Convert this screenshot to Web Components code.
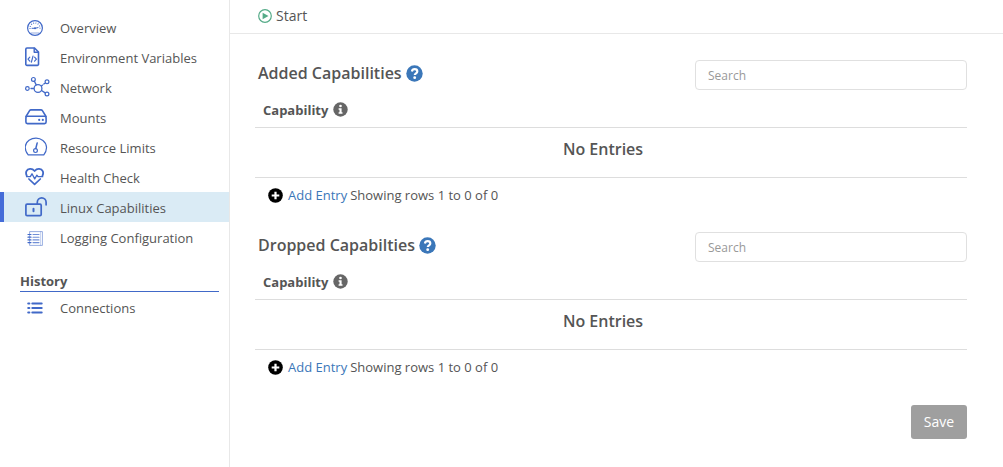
<!DOCTYPE html>
<html lang="en">
<head>
<meta charset="utf-8">
<meta name="viewport" content="width=device-width, initial-scale=1">
<title>Linux Capabilities</title>
<style>
  body {
    margin: 0;
    font: 13px/20px "Open Sans", "Noto Sans", sans-serif;
    color: #555;
    background: #fff;
    --accent: #4169c8;
    --link: #3b77b9;
    --line: #ddd;
    --line-soft: #e8e8e8;
  }
</style>
</head>
<body>
<app-shell>
  <side-nav slot="nav">
    <nav-item icon="gauge">Overview</nav-item>
    <nav-item icon="code-file">Environment Variables</nav-item>
    <nav-item icon="network">Network</nav-item>
    <nav-item icon="drive">Mounts</nav-item>
    <nav-item icon="limit">Resource Limits</nav-item>
    <nav-item icon="heart">Health Check</nav-item>
    <nav-item icon="unlock" active>Linux Capabilities</nav-item>
    <nav-item icon="log">Logging Configuration</nav-item>
    <nav-heading>History</nav-heading>
    <nav-item icon="list">Connections</nav-item>
  </side-nav>
  <action-bar slot="bar">Start</action-bar>
  <capability-panel heading="Added Capabilities"></capability-panel>
  <capability-panel heading="Dropped Capabilties"></capability-panel>
  <save-button>Save</save-button>
</app-shell>

<script>
const define = (name, markup, setup) => {
  const template = document.createElement('template');
  template.innerHTML = markup;
  customElements.define(name, class extends HTMLElement {
    constructor() {
      super();
      this.attachShadow({ mode: 'open' }).append(template.content.cloneNode(true));
    }
    connectedCallback() {
      if (setup) setup(this, this.shadowRoot);
    }
  });
};

// Navigation icons share a 26 x 22 box.
const NAV = body => ({ w: 26, h: 22, body: `<g fill="none" stroke="currentColor" stroke-linecap="round" stroke-linejoin="round">${body}</g>` });
const ICONS = {
  gauge: NAV(`<circle cx="10" cy="12" r="7.4" stroke-width="1.2"/>
    <path d="M5 13v-1a5 5 0 0 1 10 0v1" stroke-width="1.3" stroke-dasharray=".8 1.5" stroke-linecap="butt"/>
    <path d="M7 12.3h3l3-.7" stroke-width="1"/><circle cx="10" cy="12.2" r="1" fill="currentColor" stroke="none"/>
    <path d="M6 17h8" stroke-width=".8" opacity=".7"/>`),
  'code-file': NAV(`<path d="M2 2h7.5l4 4v12.2a1.2 1.2 0 0 1-1.2 1.2H2A1.2 1.2 0 0 1 .8 18.2V3.2A1.2 1.2 0 0 1 2 2z" stroke-width="1.6"/>
    <path d="M9.2 2.3v4h4" stroke-width="1.4"/>
    <path d="M4.8 11.2l-1.800 2 1.800 2M9.600 11.200l1.800 2-1.800 2M8 10.200l-1.600 6" stroke-width="1.2"/>`),
  network: NAV(`<circle cx="13" cy="12.5" r="3.9" stroke-width="1.3"/>
    <circle cx="2.4" cy="12.5" r="1.8" stroke-width="1.2"/><circle cx="8.4" cy="3.4" r="1.9" stroke-width="1.2"/>
    <circle cx="22" cy="5.7" r="1.9" stroke-width="1.2"/><circle cx="22" cy="18" r="1.9" stroke-width="1.2"/>
    <path d="M9.4 5.2l1.800 3.700M16.500 14.500l3.700 2.400" stroke-width="1.3"/>
    <path d="M6 12.5h2.500M16.500 10l1-.9M18.800 8l.7-.6" stroke-width="1.3"/>`),
  drive: NAV(`<path d="M1 10.5L4.6 4.700Q5.100 3.900 6 3.900h9.900q1 0 1.500.8l3.600 5.800" stroke-width="1.6"/>
    <rect x=".9" y="10.2" width="20.2" height="7.4" rx="1.5" stroke-width="1.6"/>
    <circle cx="14.2" cy="13.9" r="1.1" fill="currentColor" stroke="none"/><circle cx="17.8" cy="13.9" r="1.1" fill="currentColor" stroke="none"/>`),
  limit: NAV(`<path d="M3.2 18.9C-1.500 13-.2 7.300 4 4.300c4.300-3 10-2.900 13.900.1 4.200 3.300 5 9.100.9 14.500z" stroke-width="1.2"/>
    <circle cx="10.5" cy="14.6" r="1.9" stroke-width="1.2"/><path d="M10.8 12.5l1.400-5.600" stroke-width="1.5"/>`),
  heart: NAV(`<path d="M1.7 9.5C.2 6.600 1.500 3.200 5 2.900c2-.2 3.500.8 4.600 2.100 1.100-1.300 2.600-2.300 4.600-2.100 3.500.3 4.800 3.700 3.300 6.600" stroke-width="1.8"/>
    <path d="M3.9 13l5.700 5.300 5.700-5.300" stroke-width="1.7"/>
    <path d="M1.5 10.7h3.800l1.700-2.900 2.700 5.100 2.200-3.700 1.100 1.500h4.700" stroke-width="1.3"/>`),
  unlock: NAV(`<rect x=".9" y="8.2" width="15.3" height="11.4" rx="1.2" stroke-width="1.7"/>
    <path d="M12.3 8V6.200a4.400 4.400 0 0 1 8.800 0v2.600" stroke-width="1.7"/>
    <path d="M8.5 12.7v2.600" stroke-width="2"/>`),
  log: NAV(`<path d="M5 5.6h12.400v13.800H5z" stroke-width=".9" opacity=".6"/>
    <path d="M15.5 6v13" stroke-width=".7" opacity=".4"/>
    <path d="M3 8.5h3M3 11.200h3M3 13.900h3M3 16.600h3" stroke-width="1.2"/>
    <path d="M8 8.5h6M8 11.200h6M8 13.900h6M8 16.600h6" stroke-width="1.1" opacity=".75"/>`),
  list: NAV(`<path d="M7.3 7.5h9.400M7.300 12h9.400M7.300 16.500h9.400" stroke-width="2"/>
    <path d="M3.3 7.5h1M3.300 12h1M3.300 16.500h1" stroke-width="2.2"/>`),
  play: { w: 14, h: 14, body: `<circle cx="7" cy="7" r="6.3" fill="none" stroke="currentColor" stroke-width="1.2"/><path d="M4.6 3.700v6.600L10.500 7z" fill="currentColor"/>` },
  help: { w: 17, h: 17, body: `<circle cx="8.5" cy="8.5" r="8.2" fill="currentColor"/>
    <path d="M5.9 6.500c.3-1.700 1.300-2.400 2.700-2.400 1.500 0 2.700.9 2.700 2.300 0 1.900-2.500 1.900-2.500 3.700" fill="none" stroke="#fff" stroke-width="2.2"/><circle cx="8.7" cy="12.7" r="1.4" fill="#fff"/>` },
  info: { w: 15, h: 15, body: `<circle cx="7.5" cy="7.5" r="7.2" fill="currentColor"/>
    <path d="M5.6 6.300h3v3.900h.9v1.500H5.600v-1.500h.9V7.700h-.9z" fill="#fff"/><circle cx="7.5" cy="4" r="1.3" fill="#fff"/>` },
  plus: { w: 15, h: 15, body: `<circle cx="7.5" cy="7.5" r="7.3" fill="currentColor"/><path d="M7.5 3.700v7.600M3.700 7.500h7.600" stroke="#fff" stroke-width="2.2"/>` }
};

define('ui-icon', `
  <style>
    :host { display: inline-flex; flex: none; }
    svg { display: block; }
  </style>
  <span></span>`, (host, root) => {
  const { w, h, body } = ICONS[host.getAttribute('name')];
  root.querySelector('span').innerHTML = `<svg width="${w}" height="${h}" viewBox="0 0 ${w} ${h}" aria-hidden="true">${body}</svg>`;
});

define('app-shell', `
  <style>
    :host { display: grid; grid-template-columns: 230px minmax(0, 1fr); min-height: 100vh; }
    aside { border-right: 1px solid var(--line-soft); }
    main { padding: 26px 36px 28px 25px; }
  </style>
  <aside><slot name="nav"></slot></aside>
  <div>
    <slot name="bar"></slot>
    <main><slot></slot></main>
  </div>`);

define('side-nav', `
  <style>
    :host { display: block; padding-top: 12px; }
    nav { display: flex; flex-direction: column; }
  </style>
  <nav aria-label="Settings"><slot></slot></nav>`);

define('nav-item', `
  <style>
    :host { display: block; }
    a {
      display: flex; align-items: center; gap: 9px;
      height: 30px; padding-left: 21px;
      border-left: 4px solid transparent;
      color: inherit; text-decoration: none;
    }
    ui-icon { color: var(--accent); }
    span { padding-top: 2px; }
    :host([active]) a { background: #daebf5; border-left-color: #456cd8; }
  </style>
  <a href="#"><span><slot></slot></span></a>`, (host, root) => {
  const link = root.querySelector('a');
  const icon = document.createElement('ui-icon');
  icon.setAttribute('name', host.getAttribute('icon'));
  link.prepend(icon);
  if (host.hasAttribute('active')) link.setAttribute('aria-current', 'page');
});

define('nav-heading', `
  <style>
    :host { display: block; margin: 20px 10px 0 20px; border-bottom: 1px solid var(--accent); }
    h2 { margin: 0; font-size: 13px; line-height: 19px; font-weight: 700; }
  </style>
  <h2><slot></slot></h2>`);

define('action-bar', `
  <style>
    :host { display: flex; align-items: flex-start; height: 33px; padding-left: 28px; border-bottom: 1px solid var(--line-soft); }
    button {
      display: flex; align-items: center; gap: 4px; height: 32px; padding: 0;
      border: 0; background: none; font: inherit; font-size: 14px; color: inherit;
    }
    ui-icon { color: #55ab88; }
  </style>
  <button type="button"><ui-icon name="play"></ui-icon><slot></slot></button>`);

define('capability-panel', `
  <style>
    :host { display: block; margin-bottom: 20px; }
    header { display: flex; align-items: flex-start; justify-content: space-between; }
    h2 {
      display: flex; align-items: center; gap: 4px; margin: 0; padding-left: 3px;
      font-size: 16px; line-height: 26px; font-weight: 600;
    }
    h2 ui-icon { color: var(--link); }
    input {
      box-sizing: border-box; width: 272px; height: 30px; padding: 0 12px;
      border: 1px solid #e0e0e0; border-radius: 4px;
      background: #fff; font: inherit; font-size: 12px; color: inherit;
    }
    input::placeholder { color: #999; opacity: 1; }
    table { width: 100%; border-collapse: separate; border-spacing: 0; }
    th, td { border-bottom: 1px solid var(--line); padding: 0; }
    th { height: 37px; padding-left: 8px; text-align: left; font-weight: 700; }
    th div { display: flex; align-items: center; gap: 5px; padding-top: 2px; }
    th ui-icon { color: #666; }
    td {
      height: 41px; padding: 0 16px 8px 0; text-align: center;
      font-size: 16px; line-height: 24px; font-weight: 600;
    }
    footer { display: flex; align-items: center; gap: 3px; height: 34px; padding-left: 13px; }
    button {
      display: flex; align-items: center; gap: 5px; padding: 0;
      border: 0; background: none; font: inherit; color: var(--link);
    }
    button ui-icon { color: #000; }
  </style>
  <header>
    <h2><span></span><ui-icon name="help"></ui-icon></h2>
    <input type="search" placeholder="Search" aria-label="Search">
  </header>
  <table>
    <thead><tr><th scope="col"><div>Capability<ui-icon name="info"></ui-icon></div></th></tr></thead>
    <tbody><tr><td>No Entries</td></tr></tbody>
  </table>
  <footer>
    <button type="button"><ui-icon name="plus"></ui-icon>Add Entry</button>
    <span>Showing rows 1 to 0 of 0</span>
  </footer>`, (host, root) => {
  root.querySelector('h2 span').textContent = host.getAttribute('heading');
});

define('save-button', `
  <style>
    :host { display: flex; justify-content: flex-end; margin-top: 21px; }
    button {
      min-width: 56px; height: 34px; padding: 0 12px; border: 0; border-radius: 3px;
      background: #9f9f9f; color: #fff; font: inherit; font-size: 14px; font-weight: 500;
    }
  </style>
  <button type="button"><slot></slot></button>`);
</script>
</body>
</html>
